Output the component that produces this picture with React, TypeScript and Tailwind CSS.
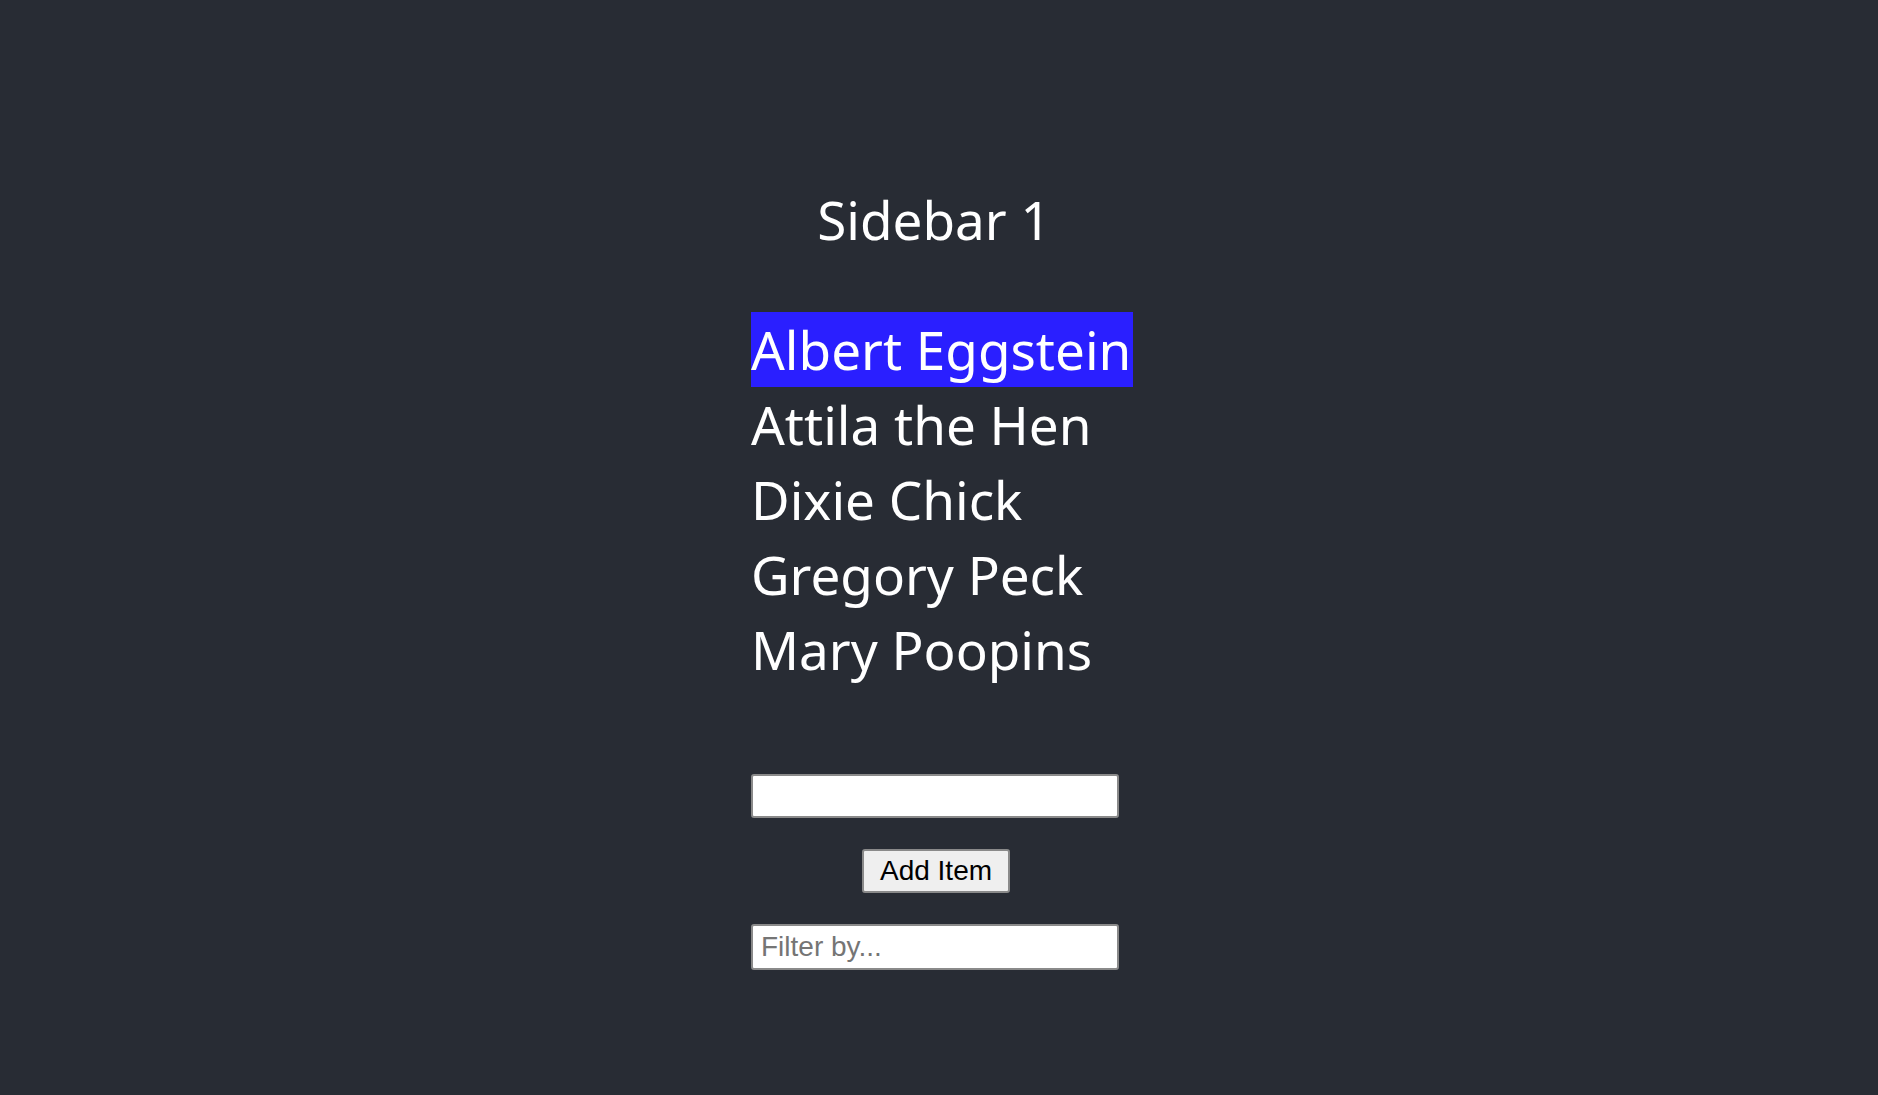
import { useState } from 'react'

const initialItems = ['Albert Eggstein', 'Attila the Hen', 'Dixie Chick', 'Gregory Peck', 'Mary Poopins']

export default function App() {
  const [items, setItems] = useState(initialItems)
  const [selected, setSelected] = useState(0)
  const [draft, setDraft] = useState('')
  const [filter, setFilter] = useState('')

  const addItem = () => {
    if (!draft.trim()) return
    setItems([...items, draft.trim()])
    setDraft('')
  }

  const visible = items.filter((i) => i.toLowerCase().includes(filter.toLowerCase()))

  return (
    <div className="min-h-screen w-full bg-[#282c34] text-white flex justify-center">
      <div className="w-[384px] ml-[8px] pt-[180px] flex flex-col font-['Noto_Sans','Open_Sans',sans-serif]">
        {/* titre */}
        <h1 className="text-[53px] leading-[80px] text-center pr-[18px] font-normal">Sidebar 1</h1>

        <ul className="mt-[52px] w-max">
          {visible.map((name, i) => (
            <li
              key={name}
              onClick={() => setSelected(i)}
              className={`text-[53px] leading-[75px] cursor-pointer pr-[2px] ${
                i === selected ? 'bg-[#2a1fff]' : ''
              }`}
            >
              {name}
            </li>
          ))}
        </ul>

        {/* formulaire */}
        <div className="mt-[87px] flex flex-col items-start font-['Liberation_Sans',Arial,sans-serif]">
          <input
            value={draft}
            onChange={(e) => setDraft(e.target.value)}
            className="w-[368px] h-[44px] bg-white border-2 border-[#8a8a8a] rounded-[3px] px-[8px] text-[28px] text-black outline-none"
          />
          <button
            onClick={addItem}
            className="mt-[31px] self-start ml-[111px] w-[148px] h-[44px] bg-[#efefef] border-2 border-[#8a8a8a] rounded-[3px] text-[28px] text-black leading-none"
          >
            Add Item
          </button>
          <input
            value={filter}
            onChange={(e) => setFilter(e.target.value)}
            placeholder="Filter by..."
            className="mt-[31px] w-[368px] h-[46px] bg-white border-2 border-[#8a8a8a] rounded-[3px] px-[8px] text-[28px] text-black placeholder:text-[#757575] outline-none"
          />
        </div>
      </div>
    </div>
  )
}
